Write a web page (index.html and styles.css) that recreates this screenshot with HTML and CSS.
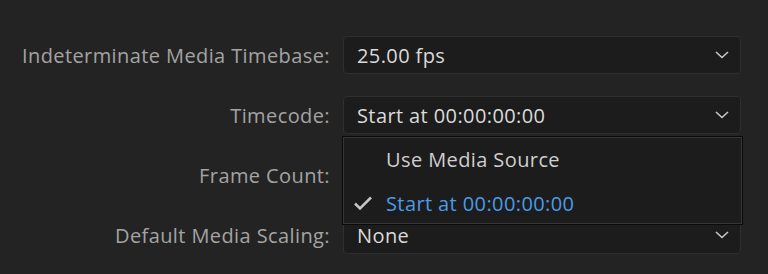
FILE: index.html
```html
<!DOCTYPE html>
<html>
<head>
    <title>Media Settings</title>
    <meta charset="UTF-8">
    <link rel="stylesheet" href="styles.css">
</head>
<body>
    <div class="settings">
        <label class="settings-label">Indeterminate Media Timebase:</label>
        <div class="select">
            <span class="select-value">25.00 fps</span>
            <svg class="chevron" width="14" height="8" viewBox="0 0 14 8"><path d="M1 1 L7 6.5 L13 1" fill="none" stroke="#c8c8c8" stroke-width="1.6"/></svg>
        </div>

        <label class="settings-label">Timecode:</label>
        <div class="select select-open">
            <span class="select-value">Start at 00:00:00:00</span>
            <svg class="chevron" width="14" height="8" viewBox="0 0 14 8"><path d="M1 1 L7 6.5 L13 1" fill="none" stroke="#c8c8c8" stroke-width="1.6"/></svg>

            <div class="menu">
                <div class="menu-item">
                    <span class="menu-check"></span>
                    <span>Use Media Source</span>
                </div>
                <div class="menu-item menu-item-selected">
                    <span class="menu-check">
                        <svg width="20" height="16" viewBox="0 0 20 16"><path d="M2 8.5 L7 13.5 L18 2.5" fill="none" stroke="#c4c4c4" stroke-width="2.6"/></svg>
                    </span>
                    <span>Start at 00:00:00:00</span>
                </div>
            </div>
        </div>

        <label class="settings-label">Frame Count:</label>
        <div class="select">
            <span class="select-value"></span>
        </div>

        <label class="settings-label">Default Media Scaling:</label>
        <div class="select">
            <span class="select-value">None</span>
            <svg class="chevron" width="14" height="8" viewBox="0 0 14 8"><path d="M1 1 L7 6.5 L13 1" fill="none" stroke="#c8c8c8" stroke-width="1.6"/></svg>
        </div>
    </div>
</body>
</html>
```

FILE: styles.css
```css
* {
    margin: 0;
    padding: 0;
    box-sizing: border-box;
}

body {
    font-family: 'Open Sans', sans-serif;
    font-size: 20px;
    letter-spacing: 0.4px;
    background: #232323;
    color: #d8d8d8;
    height: 274px;
    overflow: hidden;
}

.settings {
    display: grid;
    grid-template-columns: 330px 398px;
    grid-auto-rows: 38px;
    column-gap: 13px;
    row-gap: 22px;
    padding-top: 36px;
}

.settings-label {
    display: flex;
    align-items: center;
    justify-content: flex-end;
    color: #a3a3a3;
    white-space: nowrap;
}

.select {
    position: relative;
    display: flex;
    align-items: center;
    justify-content: space-between;
    padding: 0 11px 0 13px;
    background: #1c1c1c;
    border: 1px solid #2f2f2f;
    border-radius: 4px;
}

.select-value {
    color: #dadada;
}

.chevron {
    display: block;
}

.menu {
    position: absolute;
    top: 39px;
    left: -2px;
    width: 401px;
    height: 89px;
    background: #1c1c1c;
    border: 1px solid #0a0a0a;
    box-shadow: inset 0 0 0 1px #353535;
    z-index: 2;
}

.menu-item {
    display: flex;
    align-items: center;
    height: 44px;
    color: #cfcfcf;
}

.menu-check {
    width: 43px;
    padding-left: 10px;
    display: flex;
    align-items: center;
}

.menu-item-selected {
    color: #4b9be6;
}
```
